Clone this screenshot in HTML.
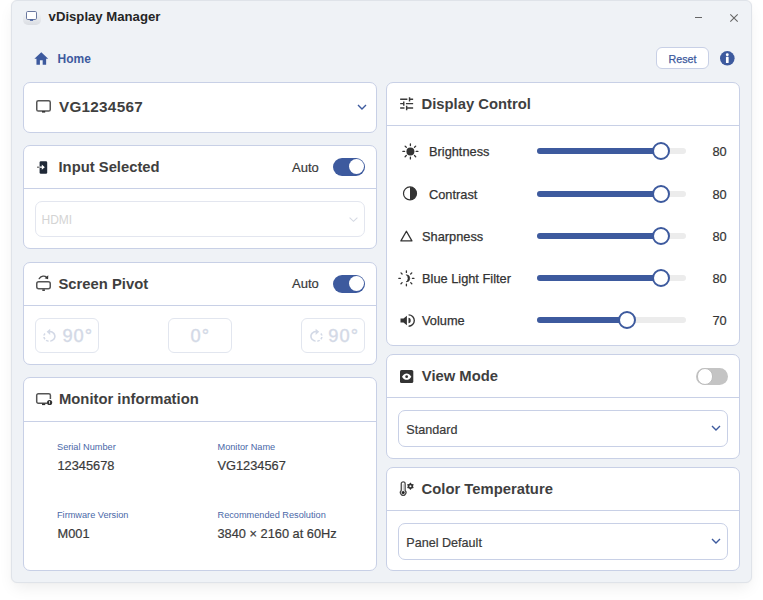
<!DOCTYPE html>
<html><head><meta charset="utf-8">
<style>
*{box-sizing:border-box;margin:0;padding:0}
html,body{width:763px;height:600px;background:#fff;overflow:hidden;font-family:"Liberation Sans",sans-serif;color:#333}
.win{position:absolute;left:11px;top:0px;width:741px;height:583px;background:#eff2f6;border:1px solid #dfe3e9;border-radius:6px;box-shadow:0 7px 16px -3px rgba(0,0,0,0.08),0 0 2px rgba(0,0,0,0.04)}
.abs{position:absolute}
svg{position:absolute;overflow:visible}
.card{position:absolute;background:#fff;border:1px solid #c8d0e6;border-radius:7px}
.div{position:absolute;height:1px;background:#c8d0e6}
.t{position:absolute;white-space:nowrap;line-height:1}
.h{font-size:14.8px;font-weight:bold;color:#3f3f3f}
.toggle{position:absolute;width:32.5px;height:18px;border-radius:9px;background:#3d5a9e}
.toggle::after{content:"";position:absolute;right:1.5px;top:1.3px;width:15px;height:15px;border-radius:50%;background:#fff}
.sel{position:absolute;border:1px solid #c8d0e6;border-radius:7px;background:#fff}
.track{position:absolute;left:537px;width:149px;height:6px;border-radius:3px;background:#ececec}
.fill{position:absolute;left:0;top:0;height:6px;border-radius:3px;background:#3d5a9e}
.knob{position:absolute;width:18px;height:18px;border-radius:50%;background:#fff;border:2px solid #3d5a9e}
.lbl{font-size:9.2px;color:#4a68a8}
.val{font-size:12.8px;color:#333;-webkit-text-stroke:0.2px #333}
.rl{font-size:12.8px;color:#333;-webkit-text-stroke:0.25px #333}
.num{font-size:12.8px;color:#3a3a3a;-webkit-text-stroke:0.2px #3a3a3a}
.pbtn{position:absolute;top:318px;width:64px;height:35px;border:1px solid #e2e6ef;border-radius:6px;background:#fff}
.pt{font-size:18.3px;color:#d3d9e6;letter-spacing:1px;-webkit-text-stroke:0.35px #d3d9e6}
</style></head>
<body>
<div class="win"></div>

<!-- title bar -->
<div class="abs" style="left:23px;top:8px;width:18px;height:17px;border-radius:5px;background:linear-gradient(#eff2f6 35%,#dadde2)"></div>
<svg style="left:26.3px;top:11.2px" width="11" height="10" viewBox="0 0 11 10"><rect x="0.5" y="0.5" width="10" height="8" rx="1.2" fill="#fff" stroke="#6a78a0" stroke-width="1"/><rect x="3.9" y="8.5" width="3.2" height="1.3" fill="#3d5a9e"/></svg>
<div class="t" style="left:48.6px;top:9.8px;font-size:13.15px;font-weight:bold;color:#252525">vDisplay Manager</div>
<div class="abs" style="left:694.8px;top:16.6px;width:7.5px;height:1.2px;background:#666"></div>
<svg style="left:730.2px;top:13.8px" width="8" height="8" viewBox="0 0 8 8"><path d="M0.3 0.3L7.7 7.7M7.7 0.3L0.3 7.7" stroke="#666" stroke-width="1.1"/></svg>

<!-- home row -->
<svg style="left:33.46px;top:50px" width="16.6" height="17.64" viewBox="0 0 24 24" preserveAspectRatio="none"><path d="M10 20v-6h4v6h5v-8h3L12 3 2 12h3v8z" fill="#3d5a9e"/></svg>
<div class="t" style="left:57.5px;top:52.5px;font-size:12px;font-weight:bold;color:#3d5a9e">Home</div>
<div class="abs" style="left:656px;top:47.3px;width:53px;height:22.2px;border:1px solid #c8d0e6;border-radius:6px;background:#fff"></div>
<div class="t" style="left:668.5px;top:53.6px;font-size:10.7px;color:#3d5a9e;-webkit-text-stroke:0.25px #3d5a9e">Reset</div>
<svg style="left:720.2px;top:51.2px" width="14.6" height="14.6" viewBox="0 0 14.6 14.6"><circle cx="7.3" cy="7.3" r="7.3" fill="#3d5a9e"/><circle cx="7.3" cy="3.7" r="1.45" fill="#fff"/><rect x="5.95" y="5.8" width="2.7" height="6.3" rx="0.6" fill="#fff"/></svg>

<!-- ============ Left card 1 ============ -->
<div class="card" style="left:23px;top:82px;width:354px;height:51px"></div>
<svg style="left:36px;top:100px" width="15" height="13" viewBox="0 0 15 13"><rect x="0.75" y="0.75" width="13.5" height="10.3" rx="1.6" fill="none" stroke="#555" stroke-width="1.5"/><rect x="6" y="11" width="3.2" height="1.6" fill="#333"/></svg>
<div class="t" style="left:59px;top:98.9px;font-size:15.3px;letter-spacing:0.25px;font-weight:bold;color:#3f3f3f">VG1234567</div>
<svg style="left:357px;top:104px" width="10" height="6" viewBox="0 0 10 6"><path d="M1 1L5 5L9 1" fill="none" stroke="#3d5a9e" stroke-width="1.4"/></svg>

<!-- ============ Left card 2 ============ -->
<div class="card" style="left:23px;top:145px;width:354px;height:104px"></div>
<div class="div" style="left:24px;top:188px;width:352px"></div>
<svg style="left:37px;top:160.5px" width="11" height="13" viewBox="0 0 11 13"><rect x="2.6" y="0.3" width="7.6" height="12.4" rx="1.3" fill="#1f2937"/><path d="M0 5.6h4.8v-2l3 2.6-3 2.6v-2H0z" fill="#fff"/><rect x="0" y="5.6" width="2.6" height="1.2" fill="#666"/></svg>
<div class="t h" style="left:58.5px;top:159.5px">Input Selected</div>
<div class="t" style="left:292px;top:160.6px;font-size:13px;color:#3a3a3a;-webkit-text-stroke:0.2px #3a3a3a">Auto</div>
<div class="toggle" style="left:332.6px;top:157.9px"></div>
<div class="sel" style="left:35px;top:201px;width:330px;height:36px;border-color:#e3e6ef"></div>
<div class="t" style="left:41.5px;top:213.5px;font-size:12px;color:#d4d4d4">HDMI</div>
<svg style="left:349px;top:217px" width="9" height="5" viewBox="0 0 9 5"><path d="M0.6 0.6L4.5 4.3L8.4 0.6" fill="none" stroke="#d5d9e3" stroke-width="1.1"/></svg>

<!-- ============ Left card 3 ============ -->
<div class="card" style="left:23px;top:262px;width:354px;height:103px"></div>
<div class="div" style="left:24px;top:305px;width:352px"></div>
<svg style="left:35px;top:274px" width="17" height="18" viewBox="0 0 17 18"><path d="M4.2 4.6C6.2 1.6 9.6 1.4 11.9 3.4" fill="none" stroke="#444" stroke-width="1.3" stroke-linecap="round"/><path d="M13.3 1.2L13.1 5.2L9.6 4.3z" fill="#333"/><rect x="1.75" y="7.75" width="13.5" height="7.1" rx="2" fill="none" stroke="#555" stroke-width="1.5"/><rect x="7.3" y="15.4" width="2.6" height="1.5" fill="#333"/></svg>
<div class="t h" style="left:58.5px;top:276.5px">Screen Pivot</div>
<div class="t" style="left:292px;top:277.2px;font-size:13px;color:#3a3a3a;-webkit-text-stroke:0.2px #3a3a3a">Auto</div>
<div class="toggle" style="left:332.6px;top:274.8px"></div>
<div class="pbtn" style="left:35px"></div>
<div class="pbtn" style="left:168px"></div>
<div class="pbtn" style="left:301px"></div>
<svg style="left:40.11px;top:327.61px" width="18.83" height="16.61" viewBox="0 0 24 24" preserveAspectRatio="none"><path d="M7.11 8.53L5.7 7.11C4.8 8.27 4.24 9.61 4.07 11h2.02c.14-.87.49-1.72 1.02-2.47zM6.09 13H4.07c.17 1.39.72 2.73 1.62 3.89l1.41-1.42c-.52-.75-.87-1.59-1.01-2.47zm1.01 5.32c1.16.9 2.51 1.44 3.9 1.61V17.9c-.87-.15-1.71-.49-2.46-1.03L7.1 18.32zM13 4.07V1L8.45 5.55 13 10V6.09c2.84.48 5 2.94 5 5.91s-2.16 5.43-5 5.91v2.02c3.95-.49 7-3.85 7-7.93s-3.05-7.44-7-7.93z" fill="#d3d9e6"/></svg>
<div class="t pt" style="left:62.4px;top:326.8px">90°</div>
<div class="t pt" style="left:190.5px;top:326.8px">0°</div>
<svg style="left:306.56px;top:327.61px" width="18.83" height="16.61" viewBox="0 0 24 24" preserveAspectRatio="none"><path d="M15.55 5.55L11 1v3.07C7.06 4.56 4 7.92 4 12s3.05 7.44 7 7.93v-2.02c-2.84-.48-5-2.94-5-5.91s2.16-5.43 5-5.91V10l4.55-4.45zM19.93 11c-.17-1.39-.72-2.73-1.62-3.89l-1.42 1.42c.54.75.88 1.6 1.02 2.47h2.02zM13 17.9v2.02c1.39-.17 2.74-.71 3.9-1.61l-1.44-1.44c-.75.54-1.59.89-2.46 1.03zm3.89-2.42l1.42 1.41c.9-1.16 1.45-2.5 1.62-3.89h-2.02c-.14.87-.48 1.72-1.02 2.48z" fill="#d3d9e6"/></svg>
<div class="t pt" style="left:328.3px;top:326.8px">90°</div>

<!-- ============ Left card 4 ============ -->
<div class="card" style="left:23px;top:377px;width:354px;height:194px"></div>
<div class="div" style="left:24px;top:421px;width:352px"></div>
<svg style="left:36px;top:392.5px" width="17" height="13" viewBox="0 0 17 13"><path d="M11.5 10.2H2.3a1.6 1.6 0 0 1-1.6-1.6V2.3A1.6 1.6 0 0 1 2.3 0.7h10.5a1.6 1.6 0 0 1 1.6 1.6V6" fill="none" stroke="#555" stroke-width="1.5"/><rect x="6" y="10.5" width="3.2" height="1.6" fill="#333"/><circle cx="13.6" cy="9.5" r="2.6" fill="#333"/><rect x="13.2" y="8.1" width="0.8" height="2.6" fill="#fff"/></svg>
<div class="t h" style="left:59px;top:391.6px">Monitor information</div>
<div class="t lbl" style="left:57px;top:442.5px">Serial Number</div>
<div class="t num" style="left:57.5px;top:460.2px">12345678</div>
<div class="t lbl" style="left:217.5px;top:442.5px">Monitor Name</div>
<div class="t num" style="left:217.5px;top:460.2px">VG1234567</div>
<div class="t lbl" style="left:57px;top:510.7px">Firmware Version</div>
<div class="t num" style="left:57.5px;top:528.1px">M001</div>
<div class="t lbl" style="left:217.5px;top:510.7px">Recommended Resolution</div>
<div class="t num" style="left:217.5px;top:528.1px">3840 × 2160 at 60Hz</div>

<!-- ============ Right card 1 ============ -->
<div class="card" style="left:386px;top:82px;width:354px;height:264px"></div>
<div class="div" style="left:387px;top:125px;width:352px"></div>
<svg style="left:397.8px;top:94.8px" width="17.3" height="17.3" viewBox="0 0 24 24"><path d="M3 17v2h6v-2H3zM3 5v2h10V5H3zm10 16v-2h8v-2h-8v-2h-2v6h2zM7 9v2H3v2h4v2h2V9H7zm14 4v-2H11v2h10zm-6-4h2V7h4V5h-4V3h-2v6z" fill="#3a3a3a"/></svg>
<div class="t h" style="left:421.5px;top:96.5px">Display Control</div>

<!-- brightness -->
<svg style="left:402px;top:143.0px" width="17" height="17" viewBox="0 0 17 17"><circle cx="8.4" cy="8.4" r="4" fill="#333"/><g stroke="#333" stroke-width="1.3" stroke-linecap="round"><path d="M8.4 0.9V2.6M8.4 14.2V15.9M0.9 8.4H2.6M14.2 8.4H15.9M3.1 3.1L4.3 4.3M12.5 12.5L13.7 13.7M13.7 3.1L12.5 4.3M4.3 12.5L3.1 13.7"/></g></svg>
<div class="t rl" style="left:429px;top:146.4px">Brightness</div>
<div class="track" style="top:148.3px"><div class="fill" style="width:124px"></div></div>
<div class="knob" style="left:652.4px;top:142.3px"></div>
<div class="t val" style="left:712.5px;top:146.4px">80</div>

<!-- contrast -->
<svg style="left:402px;top:185.2px" width="16" height="16" viewBox="0 0 16 16"><circle cx="8" cy="8.4" r="6.5" fill="none" stroke="#333" stroke-width="1.2"/><path d="M8 1.9A6.5 6.5 0 0 1 8 14.9z" fill="#333"/></svg>
<div class="t rl" style="left:429px;top:188.6px">Contrast</div>
<div class="track" style="top:190.5px"><div class="fill" style="width:124px"></div></div>
<div class="knob" style="left:652.4px;top:184.5px"></div>
<div class="t val" style="left:712.5px;top:188.6px">80</div>

<!-- sharpness -->
<svg style="left:399px;top:229.4px" width="15" height="14" viewBox="0 0 15 14"><path d="M7.4 2.3L12.9 11.9H1.9z" fill="none" stroke="#333" stroke-width="1.3" stroke-linejoin="round"/></svg>
<div class="t rl" style="left:422px;top:230.8px">Sharpness</div>
<div class="track" style="top:232.7px"><div class="fill" style="width:124px"></div></div>
<div class="knob" style="left:652.4px;top:226.7px"></div>
<div class="t val" style="left:712.5px;top:230.8px">80</div>

<!-- blue light -->
<svg style="left:398px;top:270.1px" width="17" height="17" viewBox="0 0 17 17"><g stroke="#333" stroke-width="1.3" stroke-linecap="round"><path d="M8.4 0.8V2.4M8.4 14.2V15.8M0.8 8.3H2.4M14.4 8.3H16M3 2.9L4.1 4M12.7 12.6L13.8 13.7M13.8 2.9L12.7 4M4.1 12.6L3 13.7"/></g><path d="M8.2 4.7A3.6 3.6 0 0 1 8.2 11.9A4.4 4.4 0 0 0 8.2 4.7z" fill="#333" stroke="#333" stroke-width="0.6"/></svg>
<div class="t rl" style="left:422px;top:273.0px">Blue Light Filter</div>
<div class="track" style="top:274.9px"><div class="fill" style="width:124px"></div></div>
<div class="knob" style="left:652.4px;top:268.9px"></div>
<div class="t val" style="left:712.5px;top:273.0px">80</div>

<!-- volume -->
<svg style="left:399.5px;top:314.3px" width="15" height="13" viewBox="0 0 15 13"><path d="M0.5 4.5h3l3.4-2.8v9.6L3.5 8.5h-3z" fill="#333"/><path d="M8.5 3.8A2.2 2.7 0 0 1 8.5 9.2z" fill="#333"/><path d="M8.6 0.8A5.7 5.7 0 0 1 8.6 12.2" fill="none" stroke="#333" stroke-width="1.35"/></svg>
<div class="t rl" style="left:422px;top:315.2px">Volume</div>
<div class="track" style="top:317.1px"><div class="fill" style="width:90px"></div></div>
<div class="knob" style="left:618.4px;top:311.1px"></div>
<div class="t val" style="left:712.5px;top:315.2px">70</div>

<!-- ============ Right card 2 ============ -->
<div class="card" style="left:386px;top:354px;width:354px;height:104.6px"></div>
<div class="div" style="left:387px;top:397px;width:352px"></div>
<svg style="left:400px;top:369.5px" width="14" height="14" viewBox="0 0 14 14"><rect x="0" y="0" width="13.3" height="13.1" rx="1.6" fill="#333"/><path d="M2 6.7C3.4 4.4 5 3.6 6.65 3.6S9.9 4.4 11.3 6.7C9.9 9 8.3 9.8 6.65 9.8S3.4 9 2 6.7z" fill="#fff"/><circle cx="6.65" cy="6.7" r="1.4" fill="#333"/></svg>
<div class="t h" style="left:421.8px;top:369.2px">View Mode</div>
<div class="abs" style="left:696px;top:367.5px;width:32px;height:17.5px;border-radius:9px;background:#c4c4c4"></div>
<div class="abs" style="left:696.5px;top:368px;width:16.5px;height:16.5px;border-radius:50%;background:#fff;border:1px solid #bdbdbd"></div>
<div class="sel" style="left:398px;top:410px;width:330px;height:37px"></div>
<div class="t" style="left:406.3px;top:423.6px;font-size:12.6px;color:#3a3a3a;-webkit-text-stroke:0.2px #3a3a3a">Standard</div>
<svg style="left:710.6px;top:425.2px" width="10" height="6" viewBox="0 0 10 6"><path d="M1 1L5 5L9 1" fill="none" stroke="#3d5a9e" stroke-width="1.4"/></svg>

<!-- ============ Right card 3 ============ -->
<div class="card" style="left:386px;top:467px;width:354px;height:104px"></div>
<div class="div" style="left:387px;top:510px;width:352px"></div>
<svg style="left:399px;top:481px" width="16" height="16" viewBox="0 0 16 16"><path d="M2.25 9.56V2.75a1.95 1.95 0 0 1 3.9 0V9.56A2.75 2.75 0 1 1 2.25 9.56z" fill="#fff" stroke="#4a4a4a" stroke-width="1.3"/><rect x="3.75" y="3.2" width="0.9" height="6.5" fill="#bbb"/><circle cx="4.2" cy="11.5" r="1.5" fill="#222"/><path d="M11.40 1.40 L12.70 2.95 L14.69 3.30 L14.00 5.20 L14.69 7.10 L12.70 7.45 L11.40 9.00 L10.10 7.45 L8.11 7.10 L8.80 5.20 L8.11 3.30 L10.10 2.95z" fill="#333"/><circle cx="11.4" cy="5.2" r="1.05" fill="#fff"/></svg>
<div class="t h" style="left:421.6px;top:481.5px">Color Temperature</div>
<div class="sel" style="left:398px;top:523px;width:330px;height:37px"></div>
<div class="t" style="left:406.3px;top:536.6px;font-size:12.6px;color:#3a3a3a;-webkit-text-stroke:0.2px #3a3a3a">Panel Default</div>
<svg style="left:710.6px;top:538.2px" width="10" height="6" viewBox="0 0 10 6"><path d="M1 1L5 5L9 1" fill="none" stroke="#3d5a9e" stroke-width="1.4"/></svg>

</body></html>
